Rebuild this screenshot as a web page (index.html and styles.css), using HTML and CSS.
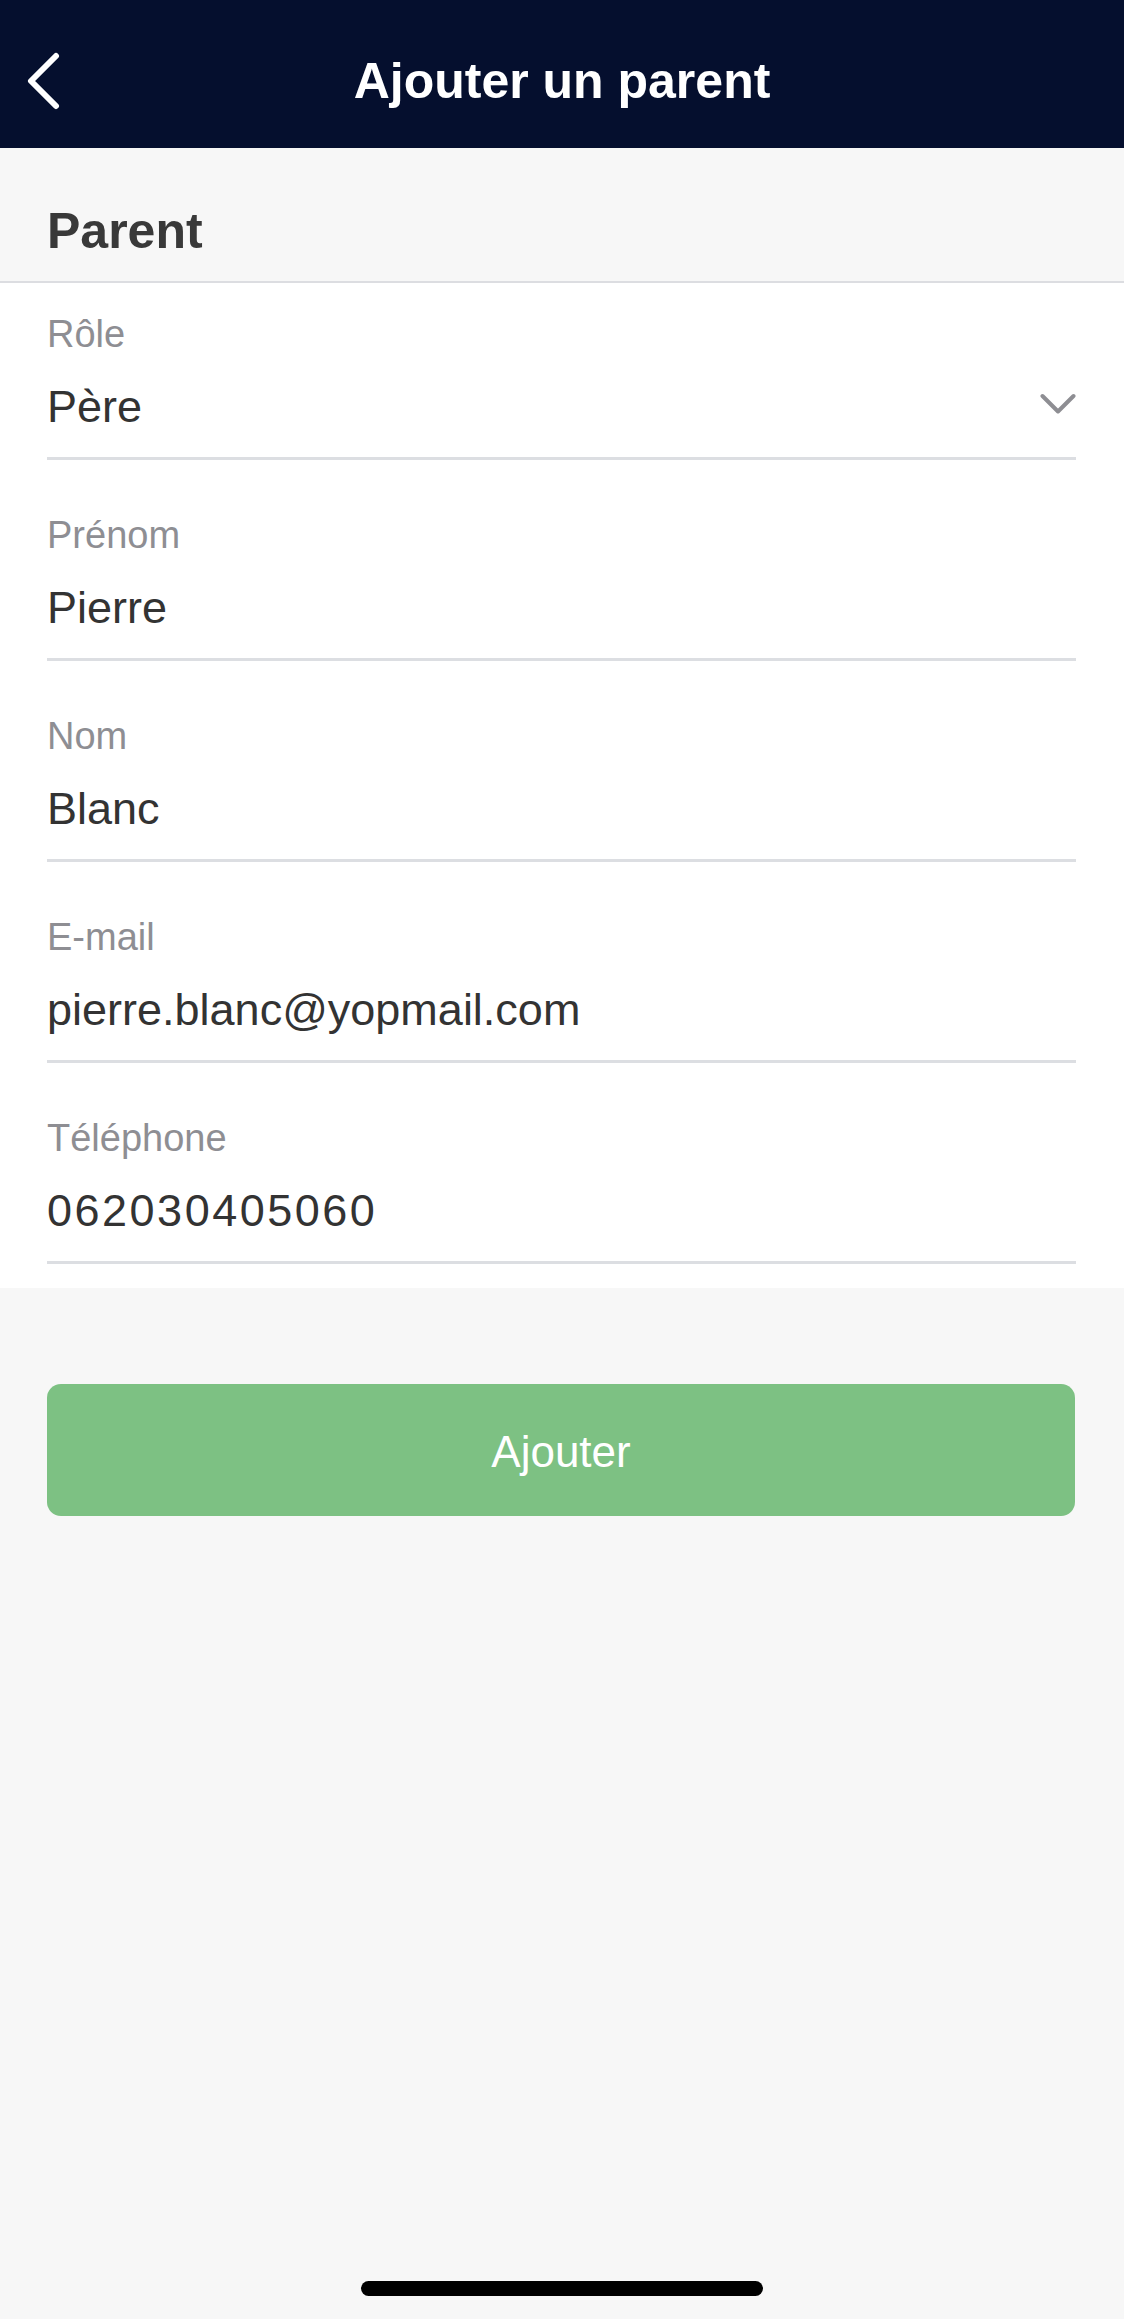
FILE: index.html
```html
<!DOCTYPE html>
<html lang="fr">
<head>
    <meta charset="UTF-8">
    <meta name="viewport" content="width=device-width, initial-scale=1.0">
    <title>Ajouter un parent</title>
    <link rel="stylesheet" href="styles.css">
</head>
<body>

    <header class="topbar">
        <a class="back" href="#" aria-label="Retour">
            <svg width="34" height="58" viewBox="0 0 34 58">
                <path d="M30 4 L5 29 L30 54" fill="none" stroke="#fff" stroke-width="6" stroke-linecap="round" stroke-linejoin="round"/>
            </svg>
        </a>
        <h1>Ajouter un parent</h1>
        <span></span>
    </header>

    <div class="section-head">Parent</div>

    <!-- Parent form -->
    <form class="fields" id="parent-form">
        <div class="field">
            <label>Rôle</label>
            <div class="value select">
                <span>Père</span>
                <svg width="36" height="22" viewBox="0 0 36 22">
                    <path d="M2.5 3 L18 18.5 L33.5 3" fill="none" stroke="#8e8e93" stroke-width="4" stroke-linecap="round" stroke-linejoin="round"/>
                </svg>
            </div>
        </div>
        <div class="field">
            <label>Prénom</label>
            <div class="value">Pierre</div>
        </div>
        <div class="field">
            <label>Nom</label>
            <div class="value">Blanc</div>
        </div>
        <div class="field">
            <label>E-mail</label>
            <div class="value">pierre.blanc@yopmail.com</div>
        </div>
        <div class="field">
            <label>Téléphone</label>
            <div class="value number">062030405060</div>
        </div>
    </form>

    <div class="actions">
        <button type="submit" form="parent-form">Ajouter</button>
    </div>

    <div class="home-indicator"></div>

</body>
</html>
```

FILE: styles.css
```css
body {
    font-family: 'Liberation Sans', Arial, sans-serif;
    background-color: #f7f7f7;
    color: #333;
    margin: 0;
    min-height: 2319px;
    position: relative;
}
.topbar {
    height: 148px;
    box-sizing: border-box;
    padding: 14px 0 0 26px;
    background-color: #050f2e;
    display: grid;
    grid-template-columns: 1fr auto 1fr;
    align-items: center;
}
.back {
    display: flex;
    width: 34px;
    height: 58px;
}
.topbar h1 {
    margin: 0;
    margin-left: -26px;
    font-size: 50px;
    line-height: 50px;
    font-weight: bold;
    color: #fff;
}
.section-head {
    padding: 58px 47px 25px;
    font-size: 50px;
    line-height: 50px;
    font-weight: bold;
    color: #393939;
    border-bottom: 2px solid #dcdde1;
}
.fields {
    margin: 0;
    background-color: #fff;
    padding: 0 48px 24px 47px;
}
.field {
    padding: 32px 0 28px;
    border-bottom: 3px solid #dcdee2;
}
.field + .field {
    margin-top: 24px;
}
label {
    display: block;
    font-size: 38px;
    line-height: 38px;
    color: #8e8e93;
}
.value {
    margin-top: 31px;
    font-size: 45px;
    line-height: 45px;
    color: #333;
}
.value.select {
    display: flex;
    justify-content: space-between;
    align-items: center;
}
.value.select svg {
    margin-top: -6px;
}
.value.number {
    letter-spacing: 2.5px;
}
.actions {
    padding: 96px 49px 0 47px;
}
button {
    width: 100%;
    height: 132px;
    padding-top: 5px;
    border: none;
    border-radius: 14px;
    background-color: #7dc183;
    color: #fff;
    font-family: inherit;
    font-size: 44px;
    cursor: pointer;
}
.home-indicator {
    position: absolute;
    left: 361px;
    bottom: 23px;
    width: 402px;
    height: 15px;
    border-radius: 8px;
    background-color: #000;
}
```
